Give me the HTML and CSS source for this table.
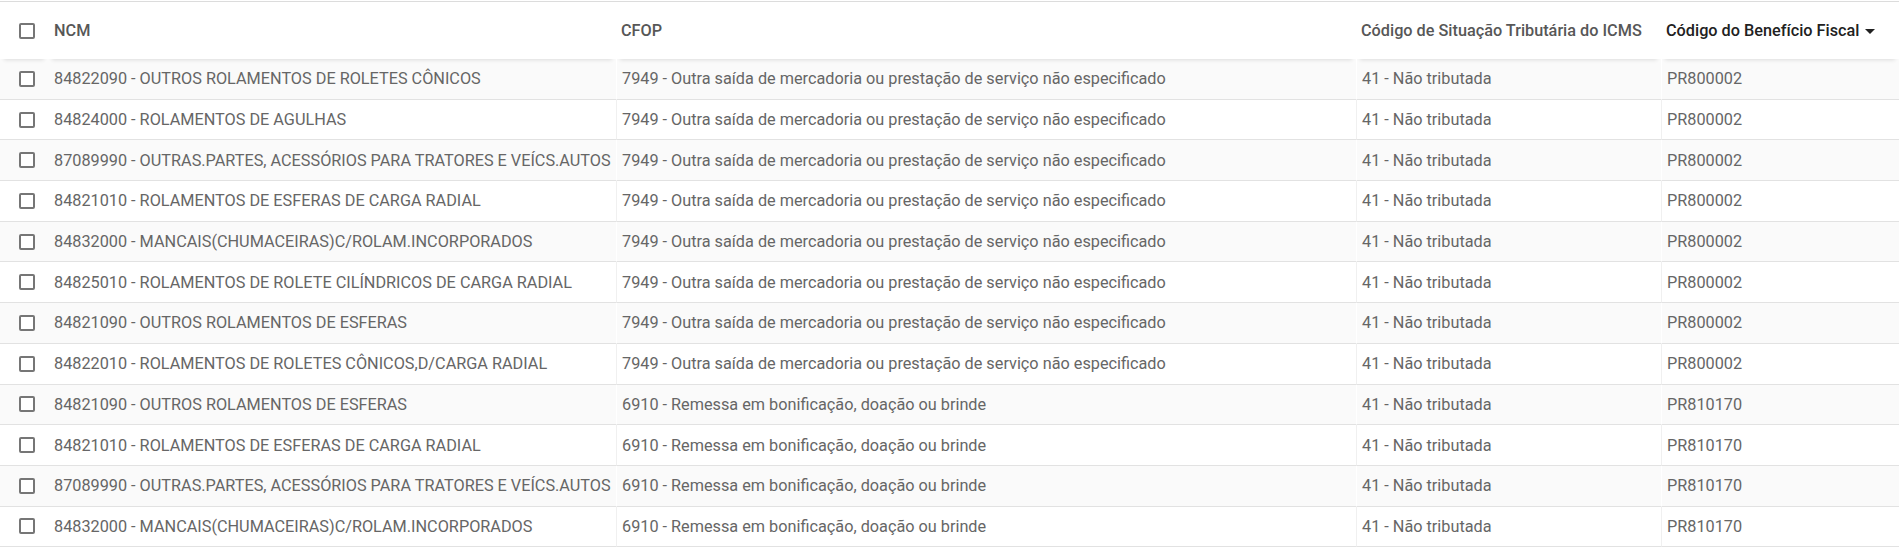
FILE: index.html
```html
<!DOCTYPE html>
<html lang="pt-BR">
<head>
  <meta charset="UTF-8">
  <meta name="viewport" content="width=device-width, initial-scale=1.0">
  <title>Benefícios Fiscais</title>
  <link rel="stylesheet" href="styles.css">
</head>
<body>
  <div class="grid-wrapper">
    <table class="grid">
      <colgroup>
        <col class="col-check">
        <col class="col-ncm">
        <col class="col-cfop">
        <col class="col-cst">
        <col class="col-benef">
      </colgroup>
      <thead>
        <tr>
          <th class="check-cell"><span class="checkbox"></span></th>
          <th>NCM</th>
          <th>CFOP</th>
          <th>Código de Situação Tributária do ICMS</th>
          <th class="sorted">Código do Benefício Fiscal<svg class="caret" width="10" height="5" viewBox="0 0 10 5"><path d="M0 0h10L5 5z"/></svg></th>
        </tr>
      </thead>
      <tbody>
        <tr>
          <td class="check-cell"><span class="checkbox"></span></td>
          <td>84822090 - OUTROS ROLAMENTOS DE ROLETES CÔNICOS</td>
          <td class="sep">7949 - Outra saída de mercadoria ou prestação de serviço não especificado</td>
          <td class="sep">41 - Não tributada</td>
          <td class="sep">PR800002</td>
        </tr>
        <tr>
          <td class="check-cell"><span class="checkbox"></span></td>
          <td>84824000 - ROLAMENTOS DE AGULHAS</td>
          <td class="sep">7949 - Outra saída de mercadoria ou prestação de serviço não especificado</td>
          <td class="sep">41 - Não tributada</td>
          <td class="sep">PR800002</td>
        </tr>
        <tr>
          <td class="check-cell"><span class="checkbox"></span></td>
          <td>87089990 - OUTRAS.PARTES, ACESSÓRIOS PARA TRATORES E VEÍCS.AUTOS</td>
          <td class="sep">7949 - Outra saída de mercadoria ou prestação de serviço não especificado</td>
          <td class="sep">41 - Não tributada</td>
          <td class="sep">PR800002</td>
        </tr>
        <tr>
          <td class="check-cell"><span class="checkbox"></span></td>
          <td>84821010 - ROLAMENTOS DE ESFERAS DE CARGA RADIAL</td>
          <td class="sep">7949 - Outra saída de mercadoria ou prestação de serviço não especificado</td>
          <td class="sep">41 - Não tributada</td>
          <td class="sep">PR800002</td>
        </tr>
        <tr>
          <td class="check-cell"><span class="checkbox"></span></td>
          <td>84832000 - MANCAIS(CHUMACEIRAS)C/ROLAM.INCORPORADOS</td>
          <td class="sep">7949 - Outra saída de mercadoria ou prestação de serviço não especificado</td>
          <td class="sep">41 - Não tributada</td>
          <td class="sep">PR800002</td>
        </tr>
        <tr>
          <td class="check-cell"><span class="checkbox"></span></td>
          <td>84825010 - ROLAMENTOS DE ROLETE CILÍNDRICOS DE CARGA RADIAL</td>
          <td class="sep">7949 - Outra saída de mercadoria ou prestação de serviço não especificado</td>
          <td class="sep">41 - Não tributada</td>
          <td class="sep">PR800002</td>
        </tr>
        <tr>
          <td class="check-cell"><span class="checkbox"></span></td>
          <td>84821090 - OUTROS ROLAMENTOS DE ESFERAS</td>
          <td class="sep">7949 - Outra saída de mercadoria ou prestação de serviço não especificado</td>
          <td class="sep">41 - Não tributada</td>
          <td class="sep">PR800002</td>
        </tr>
        <tr>
          <td class="check-cell"><span class="checkbox"></span></td>
          <td>84822010 - ROLAMENTOS DE ROLETES CÔNICOS,D/CARGA RADIAL</td>
          <td class="sep">7949 - Outra saída de mercadoria ou prestação de serviço não especificado</td>
          <td class="sep">41 - Não tributada</td>
          <td class="sep">PR800002</td>
        </tr>
        <tr>
          <td class="check-cell"><span class="checkbox"></span></td>
          <td>84821090 - OUTROS ROLAMENTOS DE ESFERAS</td>
          <td class="sep">6910 - Remessa em bonificação, doação ou brinde</td>
          <td class="sep">41 - Não tributada</td>
          <td class="sep">PR810170</td>
        </tr>
        <tr>
          <td class="check-cell"><span class="checkbox"></span></td>
          <td>84821010 - ROLAMENTOS DE ESFERAS DE CARGA RADIAL</td>
          <td class="sep">6910 - Remessa em bonificação, doação ou brinde</td>
          <td class="sep">41 - Não tributada</td>
          <td class="sep">PR810170</td>
        </tr>
        <tr>
          <td class="check-cell"><span class="checkbox"></span></td>
          <td>87089990 - OUTRAS.PARTES, ACESSÓRIOS PARA TRATORES E VEÍCS.AUTOS</td>
          <td class="sep">6910 - Remessa em bonificação, doação ou brinde</td>
          <td class="sep">41 - Não tributada</td>
          <td class="sep">PR810170</td>
        </tr>
        <tr>
          <td class="check-cell"><span class="checkbox"></span></td>
          <td>84832000 - MANCAIS(CHUMACEIRAS)C/ROLAM.INCORPORADOS</td>
          <td class="sep">6910 - Remessa em bonificação, doação ou brinde</td>
          <td class="sep">41 - Não tributada</td>
          <td class="sep">PR810170</td>
        </tr>
      </tbody>
    </table>
  </div>
</body>
</html>
```

FILE: styles.css
```css
body {
  margin: 0;
  background: #fff;
  font-family: Roboto, "Noto Sans", sans-serif;
  font-size: 16.25px;
  color: #666;
}

.grid-wrapper {
  padding-top: 1px;
}

.grid {
  width: 100%;
  table-layout: fixed;
  border-collapse: separate;
  border-spacing: 0;
  border-top: 1px solid #dcdcdc;
}

.col-check { width: 48px; }
.col-ncm { width: 568px; }
.col-cfop { width: 740px; }
.col-cst { width: 305px; }
.col-benef { width: auto; }

.grid th,
.grid td {
  padding: 0 5px;
  text-align: left;
  white-space: nowrap;
  overflow: hidden;
}

/* cabeçalho fixo com sombra */
.grid th {
  position: sticky;
  top: 0;
  z-index: 2;
  height: 57px;
  background: #fff;
  font-weight: 500;
  color: #575757;
  box-shadow: 0 5px 4px -4px rgba(0, 0, 0, 0.12);
}

.grid th:nth-child(2) {
  padding-left: 6px;
}

.grid th.sorted {
  color: #212121;
}

.caret {
  margin-left: 6px;
  vertical-align: middle;
  fill: #212121;
}

.grid td {
  height: 39.7px;
  border-bottom: 1px solid #e2e2e2;
  background: #fff;
}

.grid td:nth-child(2) {
  padding-left: 6px;
}

.grid tbody tr:nth-child(odd) td {
  background: #fafafa;
}

.grid td.sep {
  border-left: 1px solid #f0f0f0;
}

.grid tbody tr:nth-child(odd) td.sep {
  border-left-color: #fff;
}

.grid .check-cell {
  padding: 0 0 0 19px;
}

.checkbox {
  display: block;
  width: 16px;
  height: 16px;
  box-sizing: border-box;
  border: 2px solid #767676;
  border-radius: 2px;
  background: #fff;
}
```
